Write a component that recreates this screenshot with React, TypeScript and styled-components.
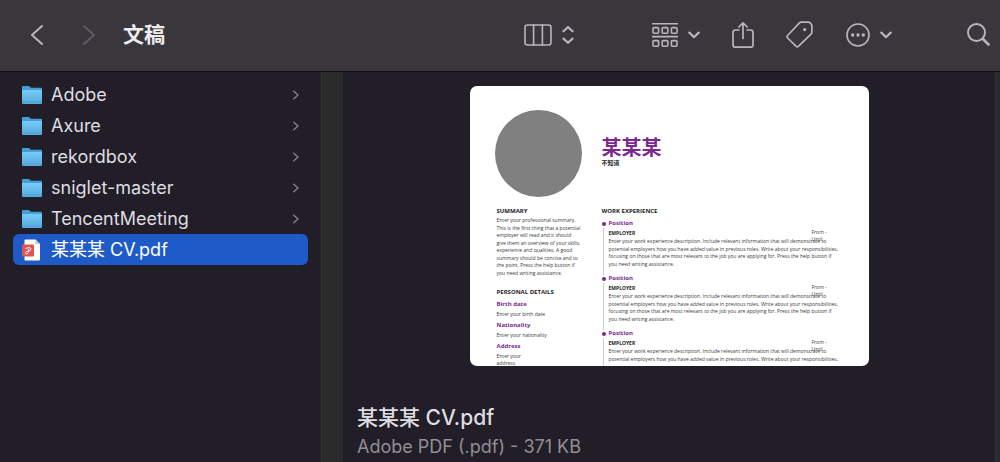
import React from "react";
import styled, { createGlobalStyle, css } from "styled-components";

const ui = `Inter, "Noto Sans CJK SC", "Liberation Sans", sans-serif`;
const doc = `"Open Sans", "Noto Sans CJK SC", sans-serif`;
const purple = "#7d2891";

const GlobalStyle = createGlobalStyle`
  *, *::before, *::after { box-sizing: border-box; }
  body { margin: 0; background: #211e27; font-family: ${ui}; color: #dfdde1; }
  h1, h2, h3, h4, p, ul, dl, dt, dd { margin: 0; padding: 0; font-weight: inherit; }
  ul { list-style: none; }
`;

const Window = styled.div`
  min-height: 100vh;
  display: flex;
  flex-direction: column;
`;

const Toolbar = styled.header`
  display: flex;
  align-items: center;
  height: 72px;
  padding: 0 10px 2px 30px;
  background: #39363c;
  border-bottom: 1px solid #0e0d10;
`;

const ToolButton = styled.button<{ $gap?: number; $dim?: boolean }>`
  display: flex;
  align-items: center;
  gap: 10px;
  flex: none;
  padding: 0;
  margin-left: ${(p) => p.$gap ?? 0}px;
  border: 0;
  background: none;
  color: ${(p) => (p.$dim ? "#5e5b62" : "#b9b5bd")};
  svg { display: block; flex: none; }
`;

const FolderTitle = styled.h1`
  flex: 1;
  margin-left: 27px;
  font-size: 21px;
  line-height: 28px;
  font-weight: 700;
  color: #eeecef;
`;

const Columns = styled.div`
  flex: 1;
  display: flex;
`;

const Sidebar = styled.nav`
  flex: none;
  width: 321px;
  padding: 7px 13px;
`;

const Splitter = styled.div<{ $width: number }>`
  flex: none;
  width: ${(p) => p.$width}px;
  background: #2b2b2b;
  border-left: 1px solid #333234;
`;

const Row = styled.a<{ $selected?: boolean }>`
  display: flex;
  align-items: center;
  gap: 9px;
  height: 31px;
  padding: 0 7px 0 9px;
  border-radius: 6px;
  font-size: 18px;
  line-height: 24px;
  color: inherit;
  text-decoration: none;
  ${(p) =>
    p.$selected &&
    css`
      background: #1e5bc9;
      color: #fff;
    `}
  svg { flex: none; display: block; }
`;

const RowName = styled.span`
  flex: 1;
  white-space: nowrap;
`;

const Preview = styled.main`
  flex: 1;
  min-width: 0;
  display: flex;
  flex-direction: column;
  padding: 14px 14px 0;
`;

const Sheet = styled.article`
  align-self: center;
  width: 399px;
  height: 280px;
  padding: 24px 26px 0 25px;
  overflow: hidden;
  border-radius: 7px;
  background: #fff;
  color: #3a3a3a;
  font-family: ${doc};
  font-size: 5px;
  white-space: nowrap;
`;

const SheetHeader = styled.div`
  display: flex;
  align-items: center;
  gap: 20px;
  height: 87px;
`;

const Portrait = styled.div`
  width: 87px;
  height: 87px;
  border-radius: 50%;
  background: #808080;
`;

const PersonName = styled.h2`
  font-size: 20px;
  line-height: 20px;
  padding-bottom: 1px;
  font-weight: 700;
  color: ${purple};
`;

const PersonRole = styled.p`
  font-size: 6px;
  line-height: 8px;
  padding-bottom: 2px;
  font-weight: 700;
  color: #222;
`;

const SheetBody = styled.div`
  display: grid;
  grid-template-columns: 105px 1fr;
  padding: 10px 0 0 2px;
`;

const Heading = styled.h3`
  font-size: 6px;
  line-height: 9px;
  font-weight: 700;
  color: #1c1c1c;
`;

const Lines = styled.p<{ $rows: number }>`
  display: grid;
  grid-auto-rows: 1fr;
  height: calc(${(p) => p.$rows} * 15px / 2);
  align-items: center;
  line-height: 7px;
`;

const Details = styled.dl`
  display: grid;
  gap: 3px;
  padding-top: 3px;
`;

const Accent = styled.span`
  display: block;
  font-size: 6px;
  line-height: 9px;
  font-weight: 700;
  color: ${purple};
`;

const DetailValue = styled.dd`
  padding-top: 2px;
  line-height: 7px;
  & + & { padding-top: 0; }
`;

const SummaryText = styled.div`
  padding-top: 1px;
`;

const DetailsHeading = styled(Heading)`
  margin-top: 11px;
`;

const Job = styled.section`
  position: relative;
  height: 55px;
  padding: 3px 0 0 7px;
  &::before {
    content: "";
    position: absolute;
    left: 1px;
    top: 12px;
    bottom: -4px;
    width: 1px;
    background: #cfcfcf;
  }
  &::after {
    content: "";
    position: absolute;
    left: 0;
    top: 6px;
    width: 4px;
    height: 4px;
    border-radius: 50%;
    background: ${purple};
  }
`;

const Employer = styled.h4`
  font-size: 5px;
  line-height: 10px;
  font-weight: 700;
  color: #1c1c1c;
`;

const Dates = styled.span`
  position: absolute;
  left: 210px;
  top: 13px;
  line-height: 7px;
`;

const FileName = styled.h2`
  margin-top: 38px;
  font-size: 21px;
  line-height: 28px;
  font-weight: 500;
`;

const FileKind = styled.p`
  font-size: 18px;
  line-height: 30px;
  color: #918e95;
`;

const stroke = {
  fill: "none",
  stroke: "currentColor",
  strokeLinecap: "round" as const,
  strokeLinejoin: "round" as const,
};

const NavIcon = ({ forward }: { forward?: boolean }) => (
  <svg width="14" height="22" viewBox="0 0 14 22" {...stroke} strokeWidth="2">
    <path d={forward ? "M2 2l10 9-10 9" : "M12 2L2 11l10 9"} />
  </svg>
);

const ChevronDown = () => (
  <svg width="12" height="8" viewBox="0 0 12 8" {...stroke} strokeWidth="2.2">
    <path d="M1.3 1.6L6 6.2l4.7-4.6" />
  </svg>
);

const ColumnsIcon = () => (
  <svg width="28" height="22" viewBox="0 0 28 22" {...stroke} strokeWidth="1.6">
    <rect x="1" y="1" width="26" height="20" rx="2.5" />
    <path d="M9.6 1v20M18.4 1v20" />
  </svg>
);

const UpDownIcon = () => (
  <svg width="12" height="20" viewBox="0 0 12 20" {...stroke} strokeWidth="2.2">
    <path d="M1.5 6.2L6 2l4.5 4.2M1.5 13.6L6 17.8l4.5-4.2" />
  </svg>
);

const GroupIcon = () => (
  <svg width="26" height="26" viewBox="0 0 26 26" {...stroke} strokeWidth="1.6">
    <path strokeLinecap="butt" d="M0 1.8h26M0 14.6h26" />
    {[5.6, 18.6].map((y) =>
      [1, 10.2, 19.4].map((x) => (
        <rect key={`${x}-${y}`} x={x} y={y} width="5.6" height="5.6" rx="1" />
      )),
    )}
  </svg>
);

const ShareIcon = () => (
  <svg width="22" height="28" viewBox="0 0 22 28" {...stroke} strokeWidth="1.7">
    <path d="M7 9H3.5Q1 9 1 11.5v12.2q0 2.5 2.5 2.5h15q2.5 0 2.5-2.5V11.5Q21 9 18.5 9H15M11 17.5V2M6.8 6L11 1.8 15.2 6" />
  </svg>
);

const TagIcon = () => (
  <svg width="27" height="27" viewBox="0 0 27 27" {...stroke} strokeWidth="1.7">
    <path d="M15.5 1.2h7q1 0 1.600.7l1.200 1.400q.6.700.6 1.600v6.300q0 1.200-.9 2L12.600 25.200q-1.300 1.200-2.600 0L1.600 17q-1.200-1.200 0-2.500L13.200 2.200q1-1 2.300-1z" />
    <circle cx="18.7" cy="8.6" r="1.6" fill="currentColor" stroke="none" />
  </svg>
);

const MoreIcon = () => (
  <svg width="24" height="24" viewBox="0 0 24 24" {...stroke} strokeWidth="1.6">
    <circle cx="12" cy="12" r="11" />
    {[6.7, 12, 17.3].map((x) => (
      <circle key={x} cx={x} cy="12" r="1.7" fill="currentColor" stroke="none" />
    ))}
  </svg>
);

const SearchIcon = () => (
  <svg width="23" height="23" viewBox="0 0 23 23" {...stroke}>
    <circle cx="9.5" cy="9.5" r="8.5" strokeWidth="1.9" />
    <path d="M16 16l5.500 5.500" strokeWidth="2.6" />
  </svg>
);

const RowChevron = () => (
  <svg width="10" height="10" viewBox="0 0 10 10" {...stroke} stroke="#85828a" strokeWidth="1.4">
    <path d="M2.800 1.200l4.200 3.800-4.200 3.800" />
  </svg>
);

const FolderIcon = () => (
  <svg width="20" height="20" viewBox="0 0 20 20">
    <defs>
      <linearGradient id="folder" x1="0" y1="0" x2="0" y2="1">
        <stop offset="0" stopColor="#79cbf8" />
        <stop offset="1" stopColor="#54a9dc" />
      </linearGradient>
    </defs>
    <path d="M0 2q0-1 1-1h5.500q.7 0 1.200.6l1 1.100H19q1 0 1 1V10H0z" fill="#459fd5" />
    <path d="M0 5h20v13q0 1-1 1H1q-1 0-1-1z" fill="url(#folder)" />
    <path d="M0 16.800h20" stroke="#4c9dcd" strokeWidth=".6" />
  </svg>
);

const PdfIcon = () => (
  <svg width="20" height="22" viewBox="0 0 20 22">
    <path d="M3.500.5h10L18 5v15.500q0 1-1 1H3.500q-1 0-1-1v-19q0-1 1-1z" fill="#fff" />
    <path d="M13.500.5L18 5h-3.500q-1 0-1-1z" fill="#bfc2c8" />
    <rect x="0" y="5.5" width="12" height="12" rx="1" fill="#df5454" />
    <path
      d="M4 9.300q3.800-1.600 4.800.2.500 2.200-2.600 2.800-2.600-.2-2.800 1.400.2 1.500 1.700 1.200 1.600-.6 1.400-4.400"
      fill="none"
      stroke="#fff"
      strokeWidth=".9"
      strokeLinecap="round"
    />
  </svg>
);

const folders = ["Adobe", "Axure", "rekordbox", "sniglet-master", "TencentMeeting"];

const summary = [
  "Enter your professional summary.",
  "This is the first thing that a potential",
  "employer will read and it should",
  "give them an overview of your skills,",
  "experience and qualities. A good",
  "summary should be concise and to",
  "the point. Press the help button if",
  "you need writing assistance.",
];

const jobText = [
  "Enter your work experience description. Include relevant information that will demonstrate to",
  "potential employers how you have added value in previous roles. Write about your responsibilities,",
  "focusing on those that are most relevant to the job you are applying for. Press the help button if",
  "you need writing assistance.",
];

const jobs = [jobText, jobText, jobText.slice(0, 2)];

const details = [
  { label: "Birth date", value: ["Enter your birth date"] },
  { label: "Nationality", value: ["Enter your nationality"] },
  { label: "Address", value: ["Enter your", "address"] },
];

const TextLines = ({ lines }: { lines: string[] }) => (
  <Lines $rows={lines.length}>
    {lines.map((line) => (
      <span key={line}>{line}</span>
    ))}
  </Lines>
);

const Resume = () => (
  <Sheet>
    <SheetHeader>
      <Portrait />
      <div>
        <PersonName>某某某</PersonName>
        <PersonRole>不知道</PersonRole>
      </div>
    </SheetHeader>
    <SheetBody>
      <div>
        <Heading>SUMMARY</Heading>
        <SummaryText>
          <TextLines lines={summary} />
        </SummaryText>
        <DetailsHeading>PERSONAL DETAILS</DetailsHeading>
        <Details>
          {details.map((d) => (
            <div key={d.label}>
              <dt>
                <Accent>{d.label}</Accent>
              </dt>
              {d.value.map((v) => (
                <DetailValue key={v}>{v}</DetailValue>
              ))}
            </div>
          ))}
        </Details>
      </div>
      <div>
        <Heading>WORK EXPERIENCE</Heading>
        {jobs.map((lines, i) => (
          <Job key={i}>
            <Accent>Position</Accent>
            <Employer>EMPLOYER</Employer>
            <TextLines lines={lines} />
            <Dates>
              From -<br />
              Until
            </Dates>
          </Job>
        ))}
      </div>
    </SheetBody>
  </Sheet>
);

export default function App() {
  return (
    <>
      <GlobalStyle />
      <Window>
        <Toolbar>
          <ToolButton aria-label="Back">
            <NavIcon />
          </ToolButton>
          <ToolButton aria-label="Forward" $gap={38} $dim>
            <NavIcon forward />
          </ToolButton>
          <FolderTitle>文稿</FolderTitle>
          <ToolButton aria-label="View as columns">
            <ColumnsIcon />
            <UpDownIcon />
          </ToolButton>
          <ToolButton aria-label="Group items" $gap={78}>
            <GroupIcon />
            <ChevronDown />
          </ToolButton>
          <ToolButton aria-label="Share" $gap={32}>
            <ShareIcon />
          </ToolButton>
          <ToolButton aria-label="Tags" $gap={32}>
            <TagIcon />
          </ToolButton>
          <ToolButton aria-label="More actions" $gap={33}>
            <MoreIcon />
            <ChevronDown />
          </ToolButton>
          <ToolButton aria-label="Search" $gap={75}>
            <SearchIcon />
          </ToolButton>
        </Toolbar>
        <Columns>
          <Sidebar aria-label="文稿">
            <ul>
              {folders.map((name) => (
                <li key={name}>
                  <Row href="#">
                    <FolderIcon />
                    <RowName>{name}</RowName>
                    <RowChevron />
                  </Row>
                </li>
              ))}
              <li>
                <Row href="#" $selected aria-current="true">
                  <PdfIcon />
                  <RowName>某某某 CV.pdf</RowName>
                </Row>
              </li>
            </ul>
          </Sidebar>
          <Splitter $width={22} />
          <Preview>
            <Resume />
            <FileName>某某某 CV.pdf</FileName>
            <FileKind>Adobe PDF (.pdf) - 371 KB</FileKind>
          </Preview>
          <Splitter $width={5} />
        </Columns>
      </Window>
    </>
  );
}
